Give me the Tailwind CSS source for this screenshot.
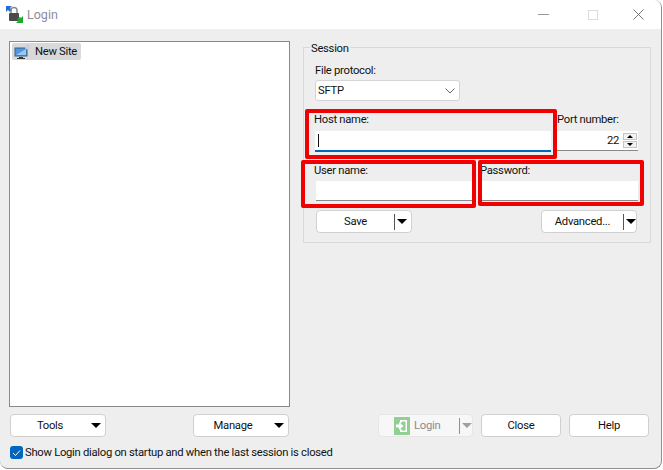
<!DOCTYPE html>
<html lang="en">
<head>
<meta charset="UTF-8">
<title>Login</title>
<script src="https://cdn.jsdelivr.net/npm/@tailwindcss/browser@4"></script>
</head>
<body class="bg-white">
<div class="relative w-[663px] h-[470px] overflow-hidden font-['Roboto',sans-serif] text-[11.25px] tracking-[-0.28px] leading-[16px] text-[#111]">
  <!-- window -->
  <div class="w-[662px] h-[469px] flex flex-col bg-[#eeeeee] border-r border-b border-[#8f8f8f] rounded-b-[8px] rounded-tr-[8px] overflow-hidden">
    <!-- title bar -->
    <div class="h-[29px] bg-white flex items-center shrink-0">
      <svg class="ml-[6px]" width="17" height="17" viewBox="0 0 17 17">
        <path d="M0 0h6L4 2l2 2-2 2-2-2-2 2z" fill="#1f6fd6"/>
        <rect x="3" y="7" width="10" height="8" rx="1" fill="#4a4a4a"/>
        <path d="M5 7V4.500a3 3 0 0 1 6 0V7" fill="none" stroke="#8a8a8a" stroke-width="1.500"/>
        <path d="M17 10v7h-7l2-2-1-2 3-2 1 1z" fill="#1fa82f"/>
      </svg>
      <span class="ml-[4px] text-[#8c8c9a] text-[12.500px] tracking-normal">Login</span>
      <div class="ml-auto flex items-center">
        <div class="w-[11px] h-px bg-[#9a9a9a] mr-[39px]"></div>
        <div class="w-[10px] h-[10px] border border-[#dcdcdc] mr-[35px]"></div>
        <svg class="mr-[17px]" width="11" height="11" viewBox="0 0 11 11"><path d="M.5.5l10 10M10.500.5l-10 10" stroke="#777" stroke-width="1"/></svg>
      </div>
    </div>
    <!-- body -->
    <div class="flex-1 relative">
      <div class="flex h-[378px] pt-[12px]">
        <!-- sites tree -->
        <div class="ml-[9px] w-[281px] h-[366px] bg-white border border-[#8a8a8a] pt-[1px] pl-[2px]">
          <div class="flex items-center h-[17px] w-[69px] bg-[#d9d9d9] rounded-[2px] pl-[2px]">
            <svg width="17" height="16" viewBox="0 0 17 16">
              <rect x="1" y="4" width="12" height="8" fill="#4f97e0" stroke="#3a5f8a"/>
              <path d="M2 11l10-6v6z" fill="#9cc8ef"/>
              <rect x="5" y="13" width="4" height="1" fill="#333"/>
              <rect x="3" y="14" width="8" height="1" fill="#333"/>
              <circle cx="13.500" cy="3" r="2.500" fill="#c3d3e3"/>
            </svg>
            <span class="ml-[4px] text-[#0b1020] whitespace-nowrap">New Site</span>
          </div>
        </div>
        <!-- session group -->
        <div class="ml-[13px] w-[348px] h-[196px] mt-[6px] border border-[#d9d9d9] relative pl-[11px] pt-[14px]">
          <span class="absolute left-[6px] top-[-7px] bg-[#eeeeee] px-px">Session</span>
          <div class="h-[16px] pt-px">File protocol:</div>
          <div class="mt-[2px] w-[145px] h-[21px] bg-white border border-[#d4d4d4] rounded-[3px] flex items-center justify-between pl-[2px] pr-[4px]">
            <span>SFTP</span>
            <svg width="10" height="6" viewBox="0 0 10 6"><path d="M.5.500L5 5 9.500.500" fill="none" stroke="#666"/></svg>
          </div>
          <div class="mt-[10px] flex">
            <div class="w-[236px]">
              <div class="h-[16px] pt-px ml-[-1px]">Host name:</div>
              <div class="mt-[4px] h-[21px] bg-white border-b-2 border-[#0067c0] flex items-center pl-[3px]">
                <div class="w-px h-[13px] bg-[#111]"></div>
              </div>
            </div>
            <div class="ml-[6px] w-[81px]">
              <div class="h-[16px] pt-px">Port number:</div>
              <div class="mt-[4px] h-[20px] bg-white border-b border-[#8a8a8a] flex items-center justify-end">
                <span>22</span>
                <div class="ml-[4px] mr-px flex flex-col gap-px">
                  <div class="w-[14px] h-[7px] bg-[#f2f2f2] border border-[#c4c4c4] flex items-center justify-center"><div class="w-0 h-0 border-x-[3px] border-x-transparent border-b-[3px] border-b-black"></div></div>
                  <div class="w-[14px] h-[7px] bg-[#f2f2f2] border border-[#c4c4c4] flex items-center justify-center"><div class="w-0 h-0 border-x-[3px] border-x-transparent border-t-[3px] border-t-black"></div></div>
                </div>
              </div>
            </div>
          </div>
          <div class="mt-[10px] flex">
            <div class="w-[156px] ml-px">
              <div class="h-[16px] pt-px ml-[-2px]">User name:</div>
              <div class="mt-[3px] h-[20px] bg-white border-b border-[#8a8a8a]"></div>
            </div>
            <div class="ml-[9px] w-[157px]">
              <div class="h-[16px] pt-px ml-[-1px]">Password:</div>
              <div class="mt-[3px] h-[20px] bg-white border-b border-[#8a8a8a]"></div>
            </div>
          </div>
          <div class="mt-[9px] ml-px w-[321px] flex justify-between">
            <div class="w-[96px] h-[23px] bg-white border border-[#d0d0d0] rounded-[4px] flex items-center">
              <span class="w-[77px] text-center">Save</span>
              <div class="w-px h-[16px] bg-[#555]"></div>
              <div class="ml-[2px] w-0 h-0 border-x-[5px] border-x-transparent border-t-[5px] border-t-black"></div>
            </div>
            <div class="w-[96px] h-[23px] bg-white border border-[#d0d0d0] rounded-[4px] flex items-center">
              <span class="w-[81px] text-center">Advanced...</span>
              <div class="w-px h-[16px] bg-[#555]"></div>
              <div class="ml-[2px] w-0 h-0 border-x-[5px] border-x-transparent border-t-[5px] border-t-black"></div>
            </div>
          </div>
        </div>
      </div>
      <!-- bottom buttons -->
      <div class="mt-[7px] flex h-[23px] pl-[10px]">
        <div class="w-[96px] bg-white border border-[#d0d0d0] rounded-[4px] flex items-center">
          <span class="w-[78px] text-center">Tools</span>
          <div class="ml-[2px] w-0 h-0 border-x-[5px] border-x-transparent border-t-[5px] border-t-black"></div>
        </div>
        <div class="ml-[87px] w-[96px] bg-white border border-[#d0d0d0] rounded-[4px] flex items-center">
          <span class="w-[78px] text-center">Manage</span>
          <div class="ml-[2px] w-0 h-0 border-x-[5px] border-x-transparent border-t-[5px] border-t-black"></div>
        </div>
        <div class="ml-[89px] w-[95px] bg-[#f7f7f7] border border-[#e6e6e6] rounded-[4px] flex items-center">
          <svg class="ml-[15px]" width="16" height="18" viewBox="0 0 16 18">
            <rect width="16" height="18" fill="#93cf93"/>
            <path d="M6 3h7v12H6v-3h1.500v1.500h4v-9h-4V6H6z" fill="#fff"/>
            <path d="M2 7.500h3V5l4.500 4L5 13v-2.500H2z" fill="#fff"/>
          </svg>
          <span class="ml-[4px] w-[36px] text-[#8a8a8a]">Login</span>
          <div class="ml-[9px] w-px h-[16px] bg-[#909090]"></div>
          <div class="ml-[2px] w-0 h-0 border-x-[5px] border-x-transparent border-t-[5px] border-t-[#a0a0a0]"></div>
        </div>
        <div class="ml-[8px] w-[80px] bg-white border border-[#d0d0d0] rounded-[4px] flex items-center justify-center">Close</div>
        <div class="ml-[8px] w-[80px] bg-white border border-[#d0d0d0] rounded-[4px] flex items-center justify-center">Help</div>
      </div>
      <!-- startup checkbox -->
      <div class="mt-[9px] ml-[10px] flex items-center h-[13px]">
        <div class="w-[13px] h-[13px] bg-[#0067c0] rounded-[3px] flex items-center justify-center">
          <svg width="9" height="8" viewBox="0 0 9 8"><path d="M1 4l2.500 2.500L8 1.500" fill="none" stroke="#fff" stroke-width="1"/></svg>
        </div>
        <span class="ml-[2px] whitespace-nowrap">Show Login dialog on startup and when the last session is closed</span>
      </div>
    </div>
  </div>
  <!-- red annotations over the screenshot -->
  <div class="absolute left-[305px] top-[109px] w-[252px] h-[50px] border-[4px] border-[#f00000] rounded-[2px]"></div>
  <div class="absolute left-[301px] top-[160px] w-[175px] h-[48px] border-[4px] border-[#f00000] rounded-[2px]"></div>
  <div class="absolute left-[478px] top-[160px] w-[166px] h-[46px] border-[4px] border-[#f00000] rounded-[2px]"></div>
</div>
</body>
</html>
